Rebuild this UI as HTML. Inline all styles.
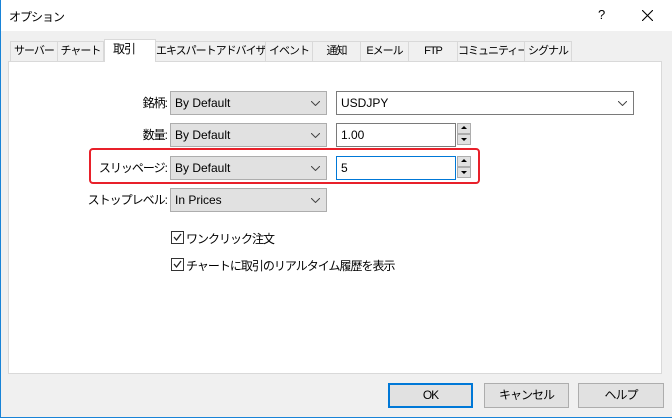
<!DOCTYPE html><html><head><meta charset="utf-8"><style>
*{box-sizing:border-box;margin:0;padding:0}
body{width:672px;height:418px;overflow:hidden;font-family:"Liberation Sans","Noto Sans CJK JP",sans-serif;font-size:12px;color:#000;background:#f0f0f0;position:relative}
.a{position:absolute;white-space:nowrap}
.j{letter-spacing:-1px}
.win{left:0;top:0;width:672px;height:418px;border-left:1px solid #1883d7;border-bottom:1px solid #1883d7}
.title{left:1px;top:0;width:671px;height:31px;background:#fff}
.tab{top:41px;height:20px;border:1px solid #d9d9d9;border-bottom:none;background:#f0f0f0;text-align:center;line-height:18px;font-size:11px;letter-spacing:-1px;overflow:hidden}
.panel{left:8px;top:61px;width:654px;height:313px;background:#fff;border:1px solid #d9d9d9}
.combo{left:170px;width:157px;height:24px;background:#e1e1e1;border:1px solid #adadad;padding-left:4px;line-height:22px}
.combo svg{position:absolute;right:6px;top:9px}
.inp{left:336px;width:120px;height:24px;background:#fff;border:1px solid #7a7a7a;padding-left:4px;line-height:22px}
.spin{left:457px;width:14px;height:11px;border:1px solid #adadad;background:#e1e1e1}
.lbl{width:120px;text-align:right;left:47px;line-height:24px;letter-spacing:-1px}
.btn{top:383px;height:25px;border:1px solid #adadad;background:#e1e1e1;text-align:center;line-height:23px;letter-spacing:-1px}
.cb{width:13px;height:13px;border:1px solid #333;background:#fff;left:171px}
</style></head><body>
<div class="a win"></div>
<div class="a title"></div>
<div class="a j" style="left:9px;top:8px">オプション</div>
<div class="a" style="left:598px;top:7px;font-size:13px">?</div>
<svg class="a" style="left:642px;top:10px" width="11" height="11"><path d="M0 0L11 11M11 0L0 11" stroke="#000" stroke-width="1.1"/></svg>
<div class="a panel"></div>
<div class="a tab" style="left:10px;width:48px">サーバー</div>
<div class="a tab" style="left:57px;width:47px">チャート</div>
<div class="a tab" style="left:155px;width:111px">エキスパートアドバイザ</div>
<div class="a tab" style="left:265px;width:48px">イベント</div>
<div class="a tab" style="left:312px;width:49px">通知</div>
<div class="a tab" style="left:360px;width:49px">Eメール</div>
<div class="a tab" style="left:408px;width:50px">FTP</div>
<div class="a tab" style="left:457px;width:68px">コミュニティー</div>
<div class="a tab" style="left:524px;width:48px">シグナル</div>
<div class="a tab" style="left:104px;top:39px;width:52px;height:23px;background:#fff;text-align:left;padding-left:8px;font-size:12px">取引</div>

<div class="a lbl" style="top:91px">銘柄:</div>
<div class="a lbl" style="top:123px">数量:</div>
<div class="a lbl" style="top:156px">スリッページ:</div>
<div class="a lbl" style="top:188px">ストップレベル:</div>

<div class="a combo" style="top:91px">By Default<svg width="9" height="5"><path d="M0 0L4.5 4.5L9 0" fill="none" stroke="#444"/></svg></div>
<div class="a combo" style="top:123px">By Default<svg width="9" height="5"><path d="M0 0L4.5 4.5L9 0" fill="none" stroke="#444"/></svg></div>
<div class="a combo" style="top:156px">By Default<svg width="9" height="5"><path d="M0 0L4.5 4.5L9 0" fill="none" stroke="#444"/></svg></div>
<div class="a combo" style="top:188px">In Prices<svg width="9" height="5"><path d="M0 0L4.5 4.5L9 0" fill="none" stroke="#444"/></svg></div>

<div class="a inp" style="top:91px;width:298px">USDJPY<svg style="position:absolute;right:6px;top:9px" width="9" height="5"><path d="M0 0L4.5 4.5L9 0" fill="none" stroke="#444"/></svg></div>
<div class="a inp" style="top:123px">1.00</div>
<div class="a spin" style="top:123px"></div><div class="a spin" style="top:134px"></div>
<div class="a inp" style="top:156px;border-color:#0078d7">5</div>
<div class="a spin" style="top:156px"></div><div class="a spin" style="top:167px"></div>
<svg class="a" style="left:460px;top:126px" width="8" height="52"><path d="M4 0L7 3H1Z M1 12H7L4 15Z M4 33L7 36H1Z M1 45H7L4 48Z" fill="#000"/></svg>
<div class="a" style="left:89px;top:148px;width:391px;height:36px;border:2px solid #e8202a;border-radius:4px"></div>

<div class="a cb" style="top:231px"></div>
<div class="a cb" style="top:258px"></div>
<svg class="a" style="left:172px;top:232px" width="11" height="40"><path d="M2 5L4.5 8L9 2M2 32L4.5 35L9 29" fill="none" stroke="#222" stroke-width="1.3"/></svg>
<div class="a j" style="left:186px;top:230px">ワンクリック注文</div>
<div class="a j" style="left:186px;top:257px">チャートに取引のリアルタイム履歴を表示</div>

<div class="a btn" style="left:388px;width:85px;border:2px solid #0078d7;line-height:21px">OK</div>
<div class="a btn" style="left:484px;width:85px">キャンセル</div>
<div class="a btn" style="left:578px;width:86px">ヘルプ</div>
</body></html>
